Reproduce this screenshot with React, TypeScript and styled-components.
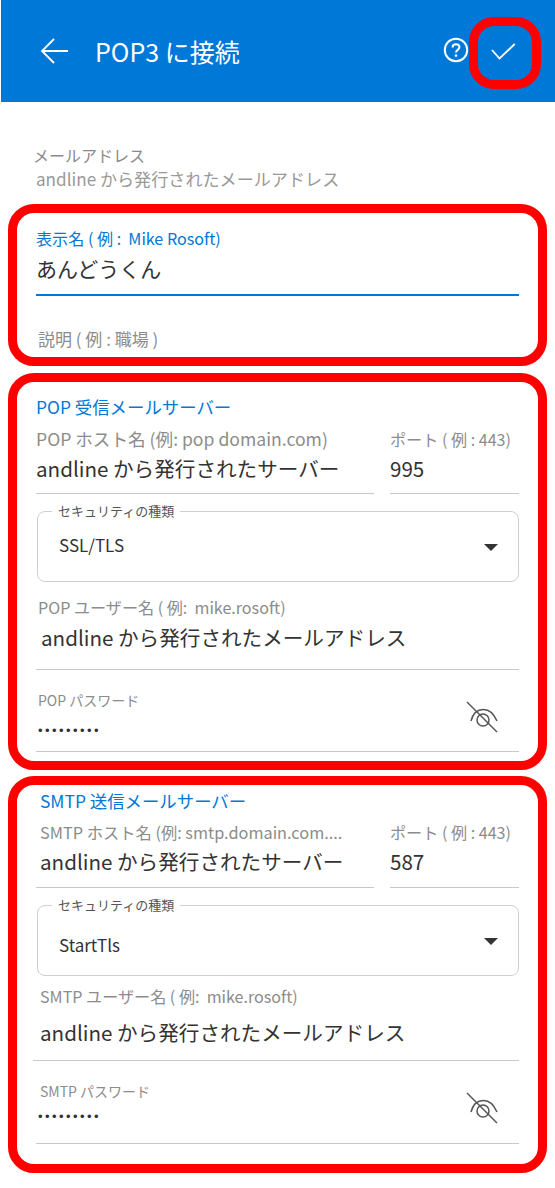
import React from 'react';
import styled, { createGlobalStyle } from 'styled-components';

const BLUE = '#0078d7';
const FONT = `"Noto Sans CJK JP", sans-serif`;

const GlobalStyle = createGlobalStyle`
  html, body { margin: 0; padding: 0; background: #fff; }
  body { font-family: ${FONT}; width: 555px; }
  * { box-sizing: border-box; }
`;

const Page = styled.div`
  width: 555px;
  height: 1188px;
  overflow: hidden;
`;

const Header = styled.header`
  position: relative;
  height: 102px;
  margin-left: 1px;
  background: ${BLUE};
  display: flex;
  align-items: center;
  color: #fff;
`;

const BackButton = styled.div`
  width: 30px;
  height: 28px;
  margin: 0 25px 0 39px;
  display: flex;
`;

const Title = styled.h1`
  flex: 1;
  margin: 0;
  font-size: 25px;
  font-weight: 400;
  line-height: 32px;
`;

const HelpIcon = styled.div`
  width: 26px;
  height: 26px;
  margin: -2px 21px 0 0;
  display: flex;
`;

const CheckIcon = styled.div`
  width: 28px;
  height: 20px;
  margin: 0 37px 0 0;
  display: flex;
`;

const Highlight = styled.div`
  position: absolute;
  left: 468px;
  top: 17px;
  width: 72px;
  height: 72px;
  border: 9px solid #ff0000;
  border-radius: 25px;
`;

const AccountInfo = styled.section`
  padding: 42px 0 0 33px;
  height: 102px;
`;

const InfoLabel = styled.div`
  font-size: 16px;
  line-height: 22px;
  color: #8a8a8a;
`;

const InfoValue = styled.div`
  margin: 1px 0 0 3px;
  font-size: 17.1px;
  line-height: 24px;
  color: #999;
`;

const Card = styled.section<{ $height: number; $gap?: number; $pt: number }>`
  width: 539px;
  height: ${(p) => p.$height}px;
  margin: ${(p) => p.$gap ?? 0}px 0 0 8px;
  padding: ${(p) => p.$pt}px 19px 0;
  border: 9px solid #ff0000;
  border-radius: 26px;
`;

const SectionTitle = styled.h2<{ $indent?: number }>`
  margin: 0 0 0 ${(p) => p.$indent ?? 0}px;
  font-size: 17.4px;
  font-weight: 400;
  line-height: 24px;
  color: ${BLUE};
`;

const Field = styled.div<{ $mt?: number; $pb?: number; $shift?: number; $line?: string }>`
  margin: ${(p) => p.$mt ?? 0}px 0 0 ${(p) => p.$shift ?? 0}px;
  padding-bottom: ${(p) => p.$pb ?? 0}px;
  border-bottom: ${(p) => p.$line ?? '1px solid #c8c8c8'};
`;

const PlainField = styled.div<{ $mt: number; $indent: number }>`
  margin: ${(p) => p.$mt}px 0 0 ${(p) => p.$indent}px;
`;

const Label = styled.div<{ $size?: number; $indent?: number; $color?: string; $height?: number }>`
  margin-left: ${(p) => p.$indent ?? 0}px;
  font-size: ${(p) => p.$size ?? 16.1}px;
  line-height: ${(p) => p.$height ?? 22}px;
  color: ${(p) => p.$color ?? '#8c8c8c'};
  white-space: pre;
`;

const Value = styled.div<{ $size?: number; $indent?: number; $gap?: number }>`
  margin: ${(p) => p.$gap ?? 3}px 0 0 ${(p) => p.$indent ?? 0}px;
  font-size: ${(p) => p.$size ?? 20.6}px;
  line-height: 30px;
  color: #333;
  white-space: nowrap;
`;

const HostRow = styled.div<{ $mt: number }>`
  margin-top: ${(p) => p.$mt}px;
  display: grid;
  grid-template-columns: 338px 129px;
  column-gap: 16px;
`;

const SelectBox = styled.div<{ $pt: number; $mt?: number }>`
  position: relative;
  height: 71px;
  margin: ${(p) => p.$mt ?? 17}px 0 0 1px;
  padding: ${(p) => p.$pt}px 20px 0 21px;
  border: 1px solid #cfcfcf;
  border-radius: 8px;
  display: flex;
  justify-content: space-between;
  align-items: flex-start;
`;

const SelectLegend = styled.span`
  position: absolute;
  left: 14px;
  top: -10px;
  padding: 0 6px;
  background: #fff;
  font-size: 13px;
  line-height: 17px;
  color: #555;
`;

const SelectValue = styled.span`
  font-size: 17px;
  line-height: 22px;
  color: #333;
`;

const Caret = styled.span<{ $mt: number }>`
  width: 0;
  height: 0;
  margin-top: ${(p) => p.$mt}px;
  border-left: 7px solid transparent;
  border-right: 7px solid transparent;
  border-top: 7px solid #333;
`;

const PasswordRow = styled.div<{ $height: number }>`
  height: ${(p) => p.$height}px;
  display: flex;
  justify-content: space-between;
`;

const Dots = styled.div<{ $mt: number }>`
  margin: ${(p) => p.$mt}px 0 0 2px;
  font-family: "Liberation Sans", sans-serif;
  font-size: 13px;
  line-height: 14px;
  letter-spacing: 2.45px;
  color: #333;
`;

const EyeButton = styled.div`
  width: 34px;
  height: 34px;
  margin: 10px 20px 0 0;
  flex: none;
`;

const ArrowLeft = () => (
  <svg width="30" height="28" viewBox="0 0 30 28" fill="none" stroke="#fff" strokeWidth="1.8">
    <path d="M28 14H2M14 2 2 14l12 12" />
  </svg>
);

const Help = () => (
  <svg width="26" height="26" viewBox="0 0 26 26" fill="none" stroke="#fff">
    <circle cx="13" cy="13" r="11.2" strokeWidth="2" />
    <path d="M9.6 10.4c0-2 1.5-3.2 3.4-3.2s3.4 1.2 3.4 3c0 2.6-3.4 2.7-3.4 5.3" strokeWidth="2" />
    <circle cx="13" cy="18.6" r="1.3" fill="#fff" stroke="none" />
  </svg>
);

const Check = () => (
  <svg width="28" height="20" viewBox="0 0 28 20" fill="none" stroke="#fff" strokeWidth="1.8">
    <path d="M2 9l7.500 8.500L24.700 3" />
  </svg>
);

const EyeOff = () => (
  <svg width="34" height="34" viewBox="0 0 34 34" fill="none" stroke="#555" strokeWidth="1.5">
    <path d="M2 2 32 32" />
    <path d="M6 21C8 13 13 9.500 18.500 9.500S29 14 32 21" />
    <circle cx="18" cy="20" r="6" />
  </svg>
);

const andlineMail = 'andline から発行されたメールアドレス';
const andlineServer = 'andline から発行されたサーバー';

function App() {
  return (
    <Page>
      <GlobalStyle />
      <Header>
        <BackButton>
          <ArrowLeft />
        </BackButton>
        <Title>POP3 に接続</Title>
        <HelpIcon>
          <Help />
        </HelpIcon>
        <CheckIcon>
          <Check />
        </CheckIcon>
        <Highlight />
      </Header>

      <AccountInfo>
        <InfoLabel>メールアドレス</InfoLabel>
        <InfoValue>{andlineMail}</InfoValue>
      </AccountInfo>

      <Card $height={162} $pt={14}>
        <Field $pb={11} $line={`2px solid ${BLUE}`}>
          <Label $color={BLUE}>表示名 ( 例 :  Mike Rosoft)</Label>
          <Value $size={21} $gap={4}>
            あんどうくん
          </Value>
        </Field>
        <PlainField $mt={32} $indent={2}>
          <Label $size={17}>説明 ( 例 : 職場 )</Label>
        </PlainField>
      </Card>

      <Card $height={397} $gap={7} $pt={13}>
        <SectionTitle>POP 受信メールサーバー</SectionTitle>
        <HostRow $mt={9}>
          <Field $pb={10}>
            <Label $size={17.6}>POP ホスト名 (例: pop domain.com)</Label>
            <Value>{andlineServer}</Value>
          </Field>
          <Field $pb={10}>
            <Label>ポート ( 例 : 443)</Label>
            <Value>995</Value>
          </Field>
        </HostRow>
        <SelectBox $pt={22}>
          <SelectLegend>セキュリティの種類</SelectLegend>
          <SelectValue>SSL/TLS</SelectValue>
          <Caret $mt={10} />
        </SelectBox>
        <Field $mt={14} $pb={17}>
          <Label $indent={2}>POP ユーザー名 ( 例:  mike.rosoft)</Label>
          <Value $gap={4} $indent={5}>
            {andlineMail}
          </Value>
        </Field>
        <Field $mt={20}>
          <PasswordRow $height={61}>
            <div>
              <Label $size={14} $indent={2} $height={20}>
                POP パスワード
              </Label>
              <Dots $mt={14}>•••••••••</Dots>
            </div>
            <EyeButton>
              <EyeOff />
            </EyeButton>
          </PasswordRow>
        </Field>
      </Card>

      <Card $height={397} $gap={6} $pt={4}>
        <SectionTitle $indent={4}>SMTP 送信メールサーバー</SectionTitle>
        <HostRow $mt={8}>
          <Field $pb={11}>
            <Label $size={16.3} $indent={4}>
              SMTP ホスト名 (例: smtp.domain.com....
            </Label>
            <Value $indent={4}>{andlineServer}</Value>
          </Field>
          <Field $pb={11}>
            <Label>ポート ( 例 : 443)</Label>
            <Value>587</Value>
          </Field>
        </HostRow>
        <SelectBox $pt={28}>
          <SelectLegend>セキュリティの種類</SelectLegend>
          <SelectValue>StartTls</SelectValue>
          <Caret $mt={4} />
        </SelectBox>
        <Field $mt={9} $pb={13} $shift={-3}>
          <Label $indent={7}>SMTP ユーザー名 ( 例:  mike.rosoft)</Label>
          <Value $gap={10} $indent={7}>
            {andlineMail}
          </Value>
        </Field>
        <Field $mt={20}>
          <PasswordRow $height={62}>
            <div>
              <Label $size={14} $indent={4} $height={20}>
                SMTP パスワード
              </Label>
              <Dots $mt={9}>•••••••••</Dots>
            </div>
            <EyeButton>
              <EyeOff />
            </EyeButton>
          </PasswordRow>
        </Field>
      </Card>
    </Page>
  );
}

export default App;
